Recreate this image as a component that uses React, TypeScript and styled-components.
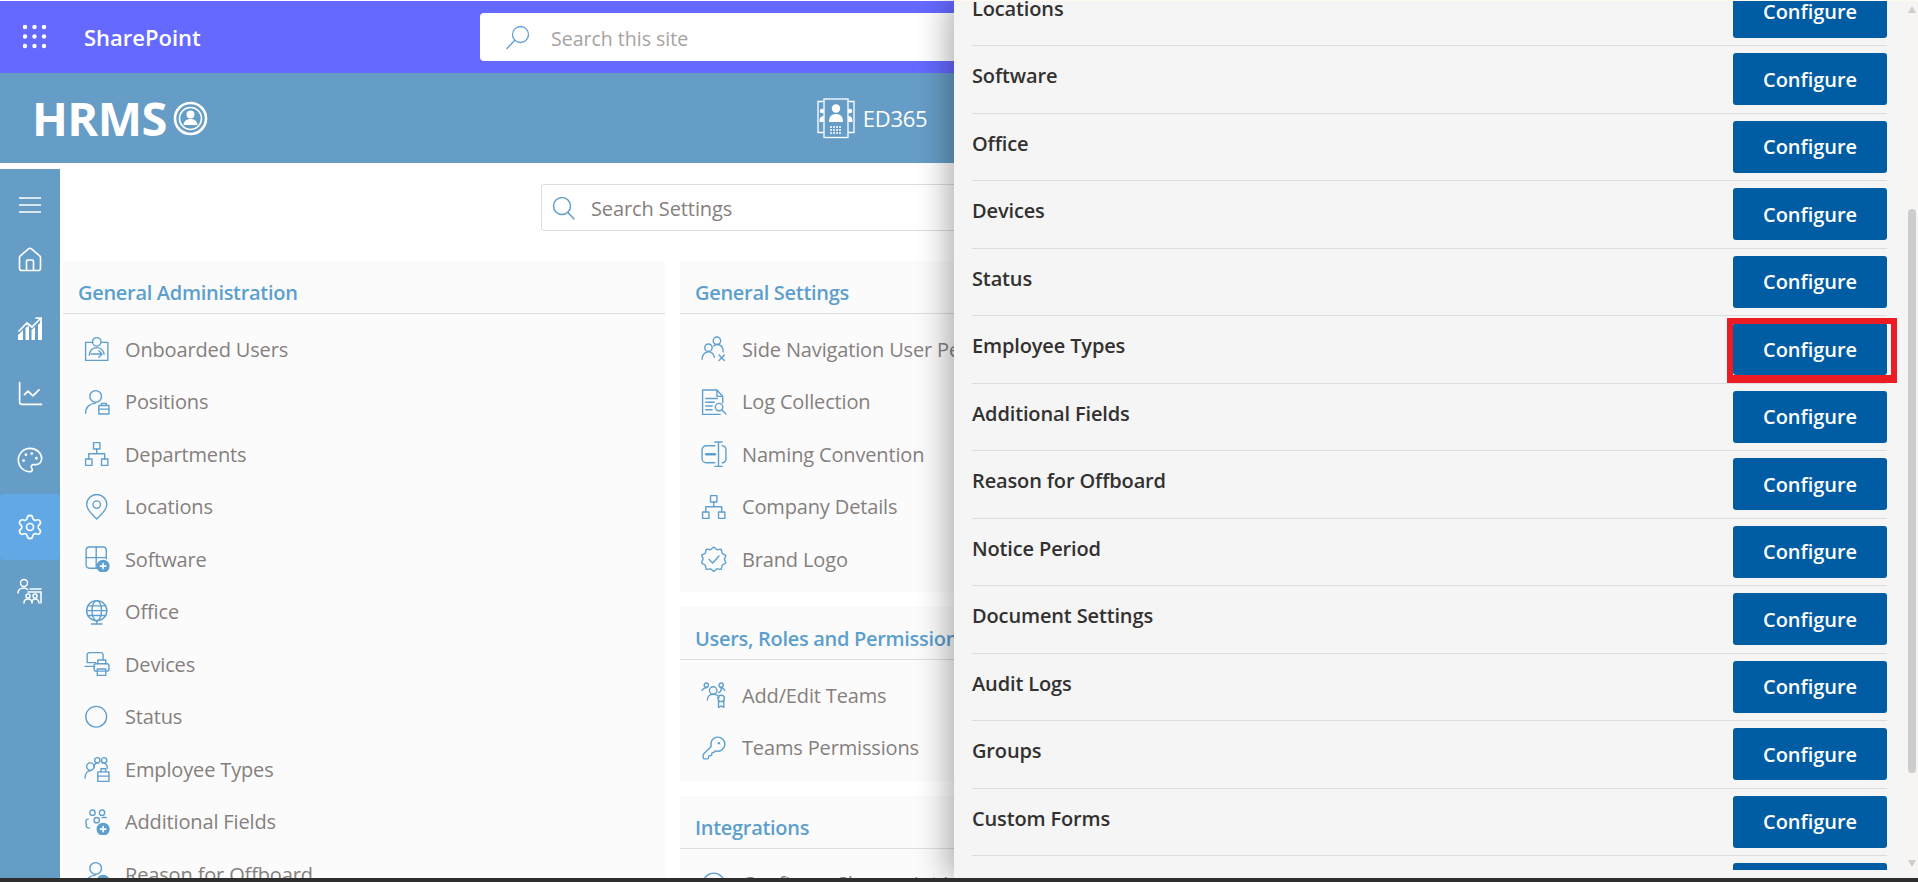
import React from "react";
import styled, { createGlobalStyle } from "styled-components";
import { House, Settings, Palette, ChartLine, KeyRound } from "lucide-react";

const FONT = `"Open Sans", "Noto Sans", "Liberation Sans", sans-serif`;

const Global = createGlobalStyle`
  html, body { margin: 0; padding: 0; height: 100%; overflow: hidden; background: #fff; }
  * { box-sizing: border-box; }
  body { font-family: ${FONT}; }
`;

const Page = styled.div`
  position: relative;
  width: 100%;
  height: 100vh;
  display: flex;
  flex-direction: column;
  overflow: hidden;
  background: #fff;
`;
const SuiteBar = styled.header`
  height: 72px;
  flex: none;
  margin-top: 1px;
  background: #6569ff;
  display: flex;
  align-items: center;
`;
const Waffle = styled.svg`
  width: 24px;
  height: 24px;
  margin-left: 23px;
  fill: #fff;
`;
const SuiteName = styled.span`
  margin-left: 37px;
  width: 396px;
  flex: none;
  font-size: 22px;
  font-weight: 600;
  letter-spacing: 0;
  color: #fff;
`;
const SiteSearch = styled.div`
  flex: 1;
  height: 48px;
  background: #fff;
  border-radius: 4px;
  display: flex;
  align-items: center;
  padding-left: 26px;
  gap: 21px;
`;
const SiteSearchText = styled.span`
  padding-top: 2px;
  font-size: 19.5px;
  color: #a6a2a0;
`;
const HeaderBar = styled.div`
  height: 90px;
  flex: none;
  background: #669dc7;
  display: flex;
  align-items: center;
  padding-left: 32px;
`;
const LogoText = styled.span`
  font-size: 47px;
  font-weight: 700;
  letter-spacing: -0.6px;
  color: #fff;
  line-height: 1;
`;
const LogoMark = styled.svg`
  width: 35px;
  height: 35px;
  margin: 0 0 0 6px;
`;
const Tenant = styled.div`
  margin-left: 609px;
  display: flex;
  align-items: center;
  gap: 8px;
  font-size: 22px;
  letter-spacing: -0.3px;
  color: #fff;
`;
const TenantMark = styled.svg`
  width: 38px;
  height: 41px;
`;
const Body = styled.div`
  flex: 1;
  min-height: 0;
  display: flex;
  padding-top: 6px;
`;
const Sidebar = styled.nav`
  width: 60px;
  flex: none;
  background: #669dc7;
  display: flex;
  flex-direction: column;
  padding-top: 19px;
`;
const NavItem = styled.div<{ $active?: boolean; $h: number }>`
  height: ${(p) => p.$h}px;
  flex: none;
  display: flex;
  align-items: center;
  justify-content: center;
  color: #fff;
  border-radius: 4px;
  background: ${(p) => (p.$active ? "#62a8e5" : "transparent")};
`;
const Main = styled.main`
  flex: 1;
  min-width: 0;
  padding: 15px 0 0 3px;
  overflow: hidden;
`;
const SearchRow = styled.div`
  display: flex;
  padding-left: 478px;
  margin-bottom: 30px;
`;
const SettingsSearch = styled.div`
  width: 800px;
  height: 47px;
  border: 1px solid #ddd;
  border-radius: 3px;
  display: flex;
  align-items: center;
  padding: 1px 0 0 10px;
  gap: 16px;
`;
const SettingsSearchText = styled.span`
  font-size: 20px;
  letter-spacing: -0.1px;
  color: #85807d;
`;
const Columns = styled.div`
  display: grid;
  grid-template-columns: 602px 602px;
  column-gap: 15px;
  align-items: start;
`;
const Column = styled.div`
  display: flex;
  flex-direction: column;
  gap: 15px;
`;
const Card = styled.section`
  background: #fbfbfb;
  padding-bottom: 6.5px;
`;
const CardTitle = styled.h2`
  margin: 0 0 9px;
  height: 53px;
  padding: 19px 0 0 15px;
  border-bottom: 1px solid #ddd;
  font-size: 20px;
  line-height: 26px;
  font-weight: 600;
  letter-spacing: -0.3px;
  white-space: nowrap;
  color: #5c9fcd;
`;
const Item = styled.div`
  height: 52.5px;
  display: flex;
  align-items: center;
  padding-left: 21px;
  gap: 15px;
  font-size: 20px;
  letter-spacing: -0.15px;
  white-space: nowrap;
  color: #85807d;
`;
const ItemGlyph = styled.svg`
  width: 26px;
  height: 26px;
  flex: none;
  fill: none;
  stroke: #5f9fcd;
  stroke-width: 1.3;
  stroke-linecap: round;
  stroke-linejoin: round;
`;
const Panel = styled.aside`
  position: absolute;
  top: 0;
  right: 0;
  bottom: 4px;
  width: 964px;
  background: #f5f5f5;
  border-top: 1px solid #fff9ee;
  box-shadow: -6px 0 30px rgba(0, 0, 0, 0.32);
  display: flex;
  padding-bottom: 8px;
`;
const PanelList = styled.div`
  flex: 1;
  min-width: 0;
  overflow: hidden;
  padding: 0 10px 0 18px;
`;
const PanelRows = styled.div`
  margin-top: -22.5px;
`;
const Row = styled.div`
  position: relative;
  height: 67.5px;
  display: flex;
  justify-content: space-between;
  padding-top: 7px;
  border-bottom: 1px solid #ddd;
`;
const RowLabel = styled.span`
  margin-top: 9px;
  font-size: 20px;
  line-height: 28px;
  font-weight: 600;
  letter-spacing: -0.14px;
  color: #323130;
`;
const ConfigureButton = styled.button`
  width: 154px;
  height: 52px;
  flex: none;
  border: none;
  border-radius: 3px;
  background: #005ca3;
  font-family: ${FONT};
  font-size: 20px;
  font-weight: 600;
  letter-spacing: -0.05px;
  color: #fff;
`;
const Highlight = styled.div`
  position: absolute;
  right: -10px;
  top: 2px;
  width: 170px;
  height: 65px;
  border: 6px solid #ed1c24;
  border-bottom-width: 8px;
`;
const Scrollbar = styled.div`
  width: 21px;
  flex: none;
  display: flex;
  flex-direction: column;
  align-items: flex-end;
  padding: 5px 2px 0 0;
  background: linear-gradient(to right, transparent 6px, #f7f5f4 6px);
`;
const ArrowUp = styled.div`
  width: 0;
  height: 0;
  border-left: 4px solid transparent;
  border-right: 4px solid transparent;
  border-bottom: 7px solid #cdcdcd;
`;
const ArrowDown = styled(ArrowUp)`
  border-bottom: none;
  border-top: 7px solid #cdcdcd;
  margin-top: 87px;
`;
const Thumb = styled.div`
  width: 8px;
  height: 564px;
  margin-top: 196px;
  border-radius: 4px;
  background: #cdcdcd;
`;
const BottomStrip = styled.div`
  height: 4px;
  flex: none;
  background: #2e2e2e;
  position: relative;
  z-index: 2;
`;

const icons: Record<string, React.ReactNode> = {
  onboard: (<><path d="M8 6H1.5v17h21V6h-6" /><circle cx="12" cy="5.5" r="4" /><path d="M5 18c.5-4 3-7 7-7s6 2.5 7 6" /><path d="M7 17h10m-3-3 3 3-3 3" /></>),
  position: (<><circle cx="11" cy="7" r="5.5" /><path d="M1.5 23c0-6 4-9.5 9-9.5" /><rect x="14" y="15.5" width="9.5" height="8" /><path d="M16.5 15.5v-2h4.5v2M14 19h9.5" /></>),
  dept: (<><rect x="9" y="1.5" width="6" height="6" /><rect x="1.5" y="17" width="6" height="6" /><rect x="16.5" y="17" width="6" height="6" /><path d="M12 7.5V12M4.5 17v-5h15v5" /></>),
  location: (<><path d="M12 23.5c-2-2.2-9.5-8-9.5-13.5a9.5 9.5 0 0 1 19 0c0 5.500-7.500 11.300-9.500 13.500z" /><circle cx="12" cy="10" r="3.500" /></>),
  software: (<><path d="M12 21H5a3 3 0 0 1-3-3V4a3 3 0 0 1 3-3h13a3 3 0 0 1 3 3v8" /><path d="M2 11h19M11.500 1v20" /><circle cx="18" cy="19" r="5.500" fill="#5f9fcd" /><path d="M15.500 19h5M18 16.500v5" stroke="#fff" strokeWidth="1.500" /></>),
  office: (<><circle cx="12" cy="11" r="9.500" /><ellipse cx="12" cy="11" rx="4.500" ry="9.500" /><path d="M2.500 11h19M3.500 6.500h17M3.500 15.500h17M12 20.500v3M7 23.500h10" /></>),
  devices: (<><path d="M18 8V3.500a2 2 0 0 0-2-2H5a2 2 0 0 0-2 2V11h8M1 14.500h9" /><rect x="9.500" y="12" width="14" height="7" rx="2" /><path d="M13 12V8.500h7.500V12" /><rect x="12.500" y="17" width="8" height="6" /></>),
  status: (<><circle cx="11.500" cy="12" r="9.800" /></>),
  emptype: (<><circle cx="6" cy="10" r="3.500" /><path d="M1 21c0-4 2-7 5-7" /><circle cx="12.500" cy="4" r="2.500" /><circle cx="19" cy="4" r="2.500" /><path d="M9.500 11c0-3 1.500-4.500 4-4.500M17 6.500c3 0 5 2 5 5" /><rect x="13" y="15" width="10.500" height="9" /><path d="M16 15v-3h4.500v3M13 19h10.500" /></>),
  additional: (<><circle cx="8" cy="3.500" r="2.500" /><circle cx="17" cy="3.500" r="2.500" /><circle cx="12" cy="10.500" r="2.500" /><path d="M4 9.500c-2.500 0-3 3-1.500 5M17 8h4M5 18c-2 0-3-1-3-3" /><circle cx="18" cy="19" r="5.500" fill="#5f9fcd" /><path d="M15.500 19h5M18 16.500v5" stroke="#fff" strokeWidth="1.500" /></>),
  reason: (<><circle cx="11" cy="7" r="5.500" /><path d="M1.500 23c0-6 4-9.500 9-9.500" /><circle cx="18" cy="19" r="5.500" fill="#5f9fcd" /></>),
  sidenav: (<><circle cx="15" cy="4.500" r="3.500" /><circle cx="7" cy="11" r="3.500" /><path d="M1 22c0-4 2.500-7 6-7s5 2 5.500 5M12 9.500c.5-1 1.500-1.500 3-1.500 3.500 0 6 2.500 6 7" /><path d="M17 18l5 5M22 18l-5 5" /></>),
  log: (<><path d="M15 1H1.500v23H18M15 1l5.500 6v6M15 1v6h5.500" /><path d="M4.500 9h11M4.500 12.500h8M4.500 16h6M4.500 19.500h6" /><circle cx="17" cy="17" r="3.500" /><path d="M19.500 19.500 23.500 23.500" /></>),
  naming: (<><path d="M13 4.500H5a4 4 0 0 0-4 4v8a4 4 0 0 0 4 4h8M20 4.500a3.500 3.500 0 0 1 3.500 4v8a3.500 3.500 0 0 1-3.500 4" /><path d="M16.500 1v23M13 1h7M13 24h7" /><path d="M5 12.500h8" strokeWidth="2.500" /></>),
  badge: (<><path d="M12 1l3 2.500 4-.5 1 4 3.500 2-1.500 3.500 1.500 3.500-3.500 2-1 4-4-.5-3 2.500-3-2.500-4 .5-1-4-3.500-2L2 12 .5 8.500 4 7l1-4 4 .5z" /><path d="M7.500 12.500l3.500 3.500 6-6.500" /></>),
  team: (<><circle cx="5" cy="3" r="2" /><circle cx="19" cy="3" r="2" /><circle cx="11.500" cy="8" r="3.500" /><path d="M1 8c1-2 2-2.500 4-2.500M22.500 8c-1-2-2-2.500-4-2.500M6 17c0-3.500 2.500-5.500 5.500-5.500S17 13 17 15M19 6.500c0 2-1 3-2.500 3.500" /><circle cx="19" cy="15.500" r="3" /><path d="M16.500 18v6l2.500-1.500L21.500 24v-6" /></>),
  confirm: (<><circle cx="12" cy="12" r="10" /></>),
};

const left = [
  ["onboard", "Onboarded Users"],
  ["position", "Positions"],
  ["dept", "Departments"],
  ["location", "Locations"],
  ["software", "Software"],
  ["office", "Office"],
  ["devices", "Devices"],
  ["status", "Status"],
  ["emptype", "Employee Types"],
  ["additional", "Additional Fields"],
  ["reason", "Reason for Offboard"],
];
const general = [
  ["sidenav", "Side Navigation User Permissions"],
  ["log", "Log Collection"],
  ["naming", "Naming Convention"],
  ["dept", "Company Details"],
  ["badge", "Brand Logo"],
];
const rows = [
  "Locations", "Software", "Office", "Devices", "Status", "Employee Types", "Additional Fields",
  "Reason for Offboard", "Notice Period", "Document Settings", "Audit Logs", "Groups", "Custom Forms", "",
];

const Glyph = ({ name }: { name: string }) => <ItemGlyph viewBox="0 0 24.500 24.500">{icons[name]}</ItemGlyph>;

const SettingsItem = ({ icon, label }: { icon: string; label: string }) => (
  <Item>
    <Glyph name={icon} />
    {label}
  </Item>
);

const MenuLines = () => (
  <svg width="22" height="16" viewBox="0 0 22 16" fill="none" stroke="#fff" strokeWidth="1.500">
    <path d="M0 1h22M0 8h22M0 15h22" />
  </svg>
);
const Analytics = () => (
  <svg width="26" height="24" viewBox="0 0 26 24" fill="none" stroke="#fff" strokeWidth="1.700" strokeLinecap="round">
    <path d="M2 14 10 6l5 4 9-9M19 1h5v5" />
    <path d="M1 23v-5l5-5v10zM8.500 23V11l3.500-2.500V23zM14.500 23V13l3.500-3v13zM21 23V8l4-4v19z" fill="#fff" stroke="none" />
  </svg>
);
const PersonTree = () => (
  <svg width="26" height="26" viewBox="0 0 26 26" fill="none" stroke="#fff" strokeWidth="1.500" strokeLinecap="round">
    <circle cx="7" cy="5" r="3.500" />
    <path d="M1 15c0-3 2.500-5 6-5 1.500 0 2.500.5 3.500 1.500" />
    <path d="M11 14h13v11M13 11h11" />
    <circle cx="11" cy="18" r="2" />
    <circle cx="18" cy="18" r="2" />
    <path d="M7 25c0-2.500 1.500-4 4-4s4 1.500 4 4M15 25c0-2.500 1-4 3-4s4 1.500 4 4" />
  </svg>
);

export default function App() {
  return (
    <Page>
      <Global />
      <SuiteBar>
        <Waffle viewBox="0 0 24 24">
          {[2, 11.500, 21].flatMap((y) => [2, 11.500, 21].map((x) => <circle key={`${x}-${y}`} cx={x} cy={y} r="2.200" />))}
        </Waffle>
        <SuiteName>SharePoint</SuiteName>
        <SiteSearch>
          <svg width="24" height="25" viewBox="0 0 24 25" fill="none" stroke="#5f9fd6" strokeWidth="1.300">
            <circle cx="14.500" cy="9.500" r="8" />
            <path d="M8.500 15.500 1 23.500" strokeLinecap="round" />
          </svg>
          <SiteSearchText>Search this site</SiteSearchText>
        </SiteSearch>
      </SuiteBar>
      <HeaderBar>
        <LogoText>HRMS</LogoText>
        <LogoMark viewBox="0 0 35 35" fill="none">
          <circle cx="17.500" cy="17.500" r="15.500" stroke="#fff" strokeWidth="2.600" />
          <circle cx="17.500" cy="17.500" r="11" stroke="#fff" strokeWidth="1.600" />
          <circle cx="17.500" cy="13.500" r="4" fill="#fff" />
          <path d="M10.500 24c.5-4 3-6 7-6s6.500 2 7 6z" fill="#fff" />
        </LogoMark>
        <Tenant>
          <TenantMark viewBox="0 0 38 41" fill="none" stroke="#fff" strokeWidth="1.300">
            <path d="M7 3.500H1v31h6M31 3.500h6v31h-6" />
            <rect x="7" y="1" width="24" height="38.500" />
            <circle cx="19" cy="10.500" r="4.200" fill="#fff" stroke="none" />
            <path d="M12 24c0-5 2-8 7-8s7 3 7 8z" fill="#fff" stroke="none" />
            <path d="M13 29h12M13 32h12M13 35h12" strokeDasharray="2 1" />
            <circle cx="5" cy="13" r="2.200" fill="#fff" stroke="none" />
            <circle cx="33" cy="13" r="2.200" fill="#fff" stroke="none" />
            <path d="M2.500 24c0-4 1-6 4.500-6v6zM35.500 24c0-4-1-6-4.500-6v6z" fill="#fff" stroke="none" />
          </TenantMark>
          ED365
        </Tenant>
      </HeaderBar>
      <Body>
        <Sidebar>
          <NavItem $h={34}><MenuLines /></NavItem>
          <NavItem $h={76}><House size={28} strokeWidth={1.400} /></NavItem>
          <NavItem $h={62}><Analytics /></NavItem>
          <NavItem $h={66}><ChartLine size={29} strokeWidth={1.400} /></NavItem>
          <NavItem $h={68}><Palette size={28} strokeWidth={1.400} /></NavItem>
          <NavItem $h={66} $active><Settings size={28} strokeWidth={1.400} /></NavItem>
          <NavItem $h={62}><PersonTree /></NavItem>
        </Sidebar>
        <Main>
          <SearchRow>
            <SettingsSearch>
              <svg width="23" height="24" viewBox="0 0 23 24" fill="none" stroke="#5f9fcd" strokeWidth="1.500">
                <circle cx="10" cy="10" r="8.500" />
                <path d="M16 16.500 22 23" strokeLinecap="round" />
              </svg>
              <SettingsSearchText>Search Settings</SettingsSearchText>
            </SettingsSearch>
          </SearchRow>
          <Columns>
            <Column>
              <Card>
                <CardTitle>General Administration</CardTitle>
                {left.map(([i, l]) => <SettingsItem key={l} icon={i} label={l} />)}
              </Card>
            </Column>
            <Column>
              <Card>
                <CardTitle>General Settings</CardTitle>
                {general.map(([i, l]) => <SettingsItem key={l} icon={i} label={l} />)}
              </Card>
              <Card>
                <CardTitle>Users, Roles and Permissions</CardTitle>
                <SettingsItem icon="team" label="Add/Edit Teams" />
                <Item>
                  <KeyRound size={26} strokeWidth={1.300} color="#5f9fcd" />
                  Teams Permissions
                </Item>
              </Card>
              <Card>
                <CardTitle>Integrations</CardTitle>
                <SettingsItem icon="confirm" label="Configure Sharepoint List" />
              </Card>
            </Column>
          </Columns>
        </Main>
      </Body>
      <BottomStrip />
      <Panel>
        <PanelList>
          <PanelRows>
            {rows.map((r, i) => (
              <Row key={i}>
                <RowLabel>{r}</RowLabel>
                <ConfigureButton>Configure</ConfigureButton>
                {r === "Employee Types" && <Highlight />}
              </Row>
            ))}
          </PanelRows>
        </PanelList>
        <Scrollbar>
          <ArrowUp />
          <Thumb />
          <ArrowDown />
        </Scrollbar>
      </Panel>
    </Page>
  );
}
